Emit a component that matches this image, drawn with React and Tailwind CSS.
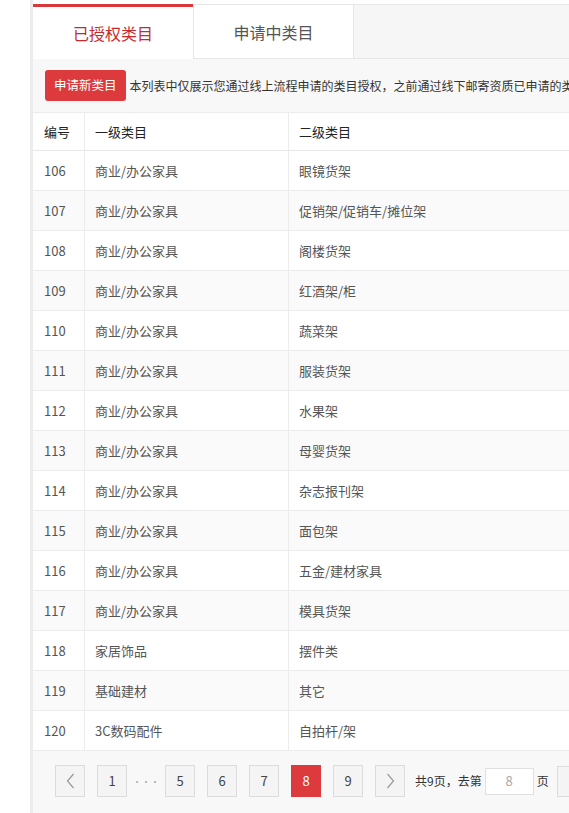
const rows = [
  ['106', '商业/办公家具', '眼镜货架'],
  ['107', '商业/办公家具', '促销架/促销车/摊位架'],
  ['108', '商业/办公家具', '阁楼货架'],
  ['109', '商业/办公家具', '红酒架/柜'],
  ['110', '商业/办公家具', '蔬菜架'],
  ['111', '商业/办公家具', '服装货架'],
  ['112', '商业/办公家具', '水果架'],
  ['113', '商业/办公家具', '母婴货架'],
  ['114', '商业/办公家具', '杂志报刊架'],
  ['115', '商业/办公家具', '面包架'],
  ['116', '商业/办公家具', '五金/建材家具'],
  ['117', '商业/办公家具', '模具货架'],
  ['118', '家居饰品', '摆件类'],
  ['119', '基础建材', '其它'],
  ['120', '3C数码配件', '自拍杆/架'],
];

const font = { fontFamily: '"Noto Sans CJK SC", "Noto Sans", sans-serif' };

function PageBtn({ children, active }) {
  return (
    <div
      className={
        'w-[30px] h-[32px] flex items-center justify-center text-[13px] border ' +
        (active
          ? 'bg-[#dc3a3c] border-[#dc3a3c] text-white'
          : 'bg-[#f4f4f4] border-[#dcdcdc] text-[#444]')
      }
    >
      {children}
    </div>
  );
}

export default function App() {
  return (
    <div className="w-[569px] h-[813px] overflow-hidden bg-white flex" style={font}>
      <div className="w-[30px] shrink-0" />
      <div className="w-[900px] shrink-0 border-l-[3px] border-[#ececec] flex flex-col">
        {/* tabs */}
        <div className="pt-[4px] flex h-[59px]">
          <div className="w-[160px] border-t-[3px] border-[#d9383a] bg-white flex items-center justify-center text-[16px] text-[#c8292c]">
            已授权类目
          </div>
          <div className="w-[161px] border-t border-x border-b border-[#e6e6e6] bg-white flex items-center justify-center text-[16px] text-[#555]">
            申请中类目
          </div>
          <div className="flex-1 bg-[#f6f6f6] border-b border-t border-[#e6e6e6]" />
        </div>

        {/* toolbar */}
        <div className="h-[54px] bg-[#f8f8f8] border-b border-[#ececec] flex items-center pl-[12px] gap-[4px] whitespace-nowrap">
          <div className="h-[31px] px-[9px] rounded-[3px] bg-[#dc3a3c] text-white text-[12.5px] flex items-center">
            申请新类目
          </div>
          <div className="text-[12px] text-[#333]">
            本列表中仅展示您通过线上流程申请的类目授权，之前通过线下邮寄资质已申请的类目不在此处展示
          </div>
        </div>

        {/* table */}
        <div className="flex flex-col text-[13px] text-[#555]">
          <div className="h-[38px] flex bg-white border-b border-[#e8e8e8] text-[#222]">
            <div className="w-[52px] pl-[11px] flex items-center border-r border-[#ececec]">编号</div>
            <div className="w-[204px] pl-[10px] flex items-center border-r border-[#ececec]">一级类目</div>
            <div className="flex-1 pl-[10px] flex items-center">二级类目</div>
          </div>
          {rows.map((r, i) => (
            <div
              key={r[0]}
              className={
                'h-[40px] flex border-b border-[#ececec] ' +
                (i % 2 === 0 ? 'bg-white' : 'bg-[#fafafa]')
              }
            >
              <div className="w-[52px] pl-[11px] flex items-center border-r border-[#ececec]">{r[0]}</div>
              <div className="w-[204px] pl-[10px] flex items-center border-r border-[#ececec]">{r[1]}</div>
              <div className="flex-1 pl-[10px] flex items-center">{r[2]}</div>
            </div>
          ))}
        </div>

        {/* pagination */}
        <div className="flex-1 bg-[#f8f8f8] pt-[14px] pl-[22px]">
          <div className="flex items-center gap-[12px] whitespace-nowrap">
            <PageBtn>
              <svg width="9" height="16" viewBox="0 0 9 16" fill="none" stroke="#999" strokeWidth="1.2">
                <path d="M7.5 1L1.5 8l6 7" />
              </svg>
            </PageBtn>
            <PageBtn>1</PageBtn>
            <div className="w-[14px] flex justify-center text-[9px] leading-none text-[#aaa]">···</div>
            <PageBtn>5</PageBtn>
            <PageBtn>6</PageBtn>
            <PageBtn>7</PageBtn>
            <PageBtn active>8</PageBtn>
            <PageBtn>9</PageBtn>
            <PageBtn>
              <svg width="9" height="16" viewBox="0 0 9 16" fill="none" stroke="#999" strokeWidth="1.2">
                <path d="M1.5 1l6 7-6 7" />
              </svg>
            </PageBtn>
            <div className="flex items-center text-[12px] text-[#333] -ml-[2px]">
              <span>共9页，去第</span>
              <div className="ml-[3px] w-[49px] h-[27px] bg-white border border-[#e0e0e0] flex items-center justify-center text-[13px] text-[#aaa]">
                8
              </div>
              <span className="ml-[3px]">页</span>
              <div className="ml-[8px] w-[40px] h-[31px] bg-[#f4f4f4] border border-[#dcdcdc]" />
            </div>
          </div>
        </div>
      </div>
    </div>
  );
}
